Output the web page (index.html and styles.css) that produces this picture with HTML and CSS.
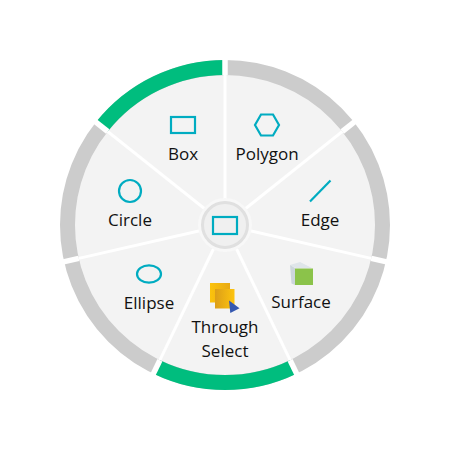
FILE: index.html
```html
<!DOCTYPE html>
<html lang="en">
<head>
<meta charset="utf-8">
<title>Selection wheel</title>
<link rel="stylesheet" href="styles.css">
</head>
<body>
<div class="wheel">
  <svg class="dial" width="450" height="450" viewBox="0 0 450 450">
    <circle class="plate" cx="225" cy="225" r="151"/>
    <circle class="ring" cx="225" cy="225" r="157.500"/>
    <path class="ring-on" d="M225 67.500A157.500 157.500 0 0 0 101.900 126.800"/>
    <path class="ring-on" d="M156.700 366.900A157.500 157.500 0 0 0 293.300 366.900"/>
    <g class="cuts">
      <path d="M225 225V75"/>
      <path d="M225 225L342.300 131.500"/>
      <path d="M225 225L371.200 258.400"/>
      <path d="M225 225L290.100 360.200"/>
      <path d="M225 225L159.900 360.200"/>
      <path d="M225 225L78.800 258.400"/>
      <path d="M225 225L107.700 131.500"/>
    </g>
    <g class="gaps">
      <path d="M225 75V57"/>
      <path d="M342.300 131.500L356.300 120.300"/>
      <path d="M371.200 258.400L388.800 262.400"/>
      <path d="M290.100 360.200L297.900 376.400"/>
      <path d="M159.900 360.200L152.100 376.400"/>
      <path d="M78.800 258.400L61.200 262.400"/>
      <path d="M107.700 131.500L93.700 120.300"/>
    </g>
    <circle class="hub-halo" cx="225" cy="225" r="27"/>
    <circle class="hub" cx="225" cy="225" r="22.500"/>
    <rect class="glyph" x="213" y="217" width="24" height="17"/>
  </svg>

  <div class="item item-box">
    <div class="slot"><svg width="28" height="20" viewBox="0 0 28 20"><rect class="glyph" x="2" y="2" width="24" height="16"/></svg></div>
    <span class="label">Box</span>
  </div>
  <div class="item item-polygon">
    <div class="slot"><svg width="30" height="26" viewBox="0 0 30 26"><path class="glyph" d="M9 2.500H21L27 13L21 23.500H9L3 13Z"/></svg></div>
    <span class="label">Polygon</span>
  </div>
  <div class="item item-edge">
    <div class="slot"><svg width="24" height="24" viewBox="0 0 24 24"><path class="glyph" d="M2 22.500L22.500 1.500"/></svg></div>
    <span class="label">Edge</span>
  </div>
  <div class="item item-surface">
    <div class="slot"><svg width="23" height="23" viewBox="0 0 23 23">
      <path class="cube-top" d="M0 3L10 0L22 6H6Z"/>
      <path class="cube-side" d="M0 3L5 6V23L1.500 21.500Z"/>
      <rect class="cube-face" x="5" y="6.500" width="18" height="16.500"/>
    </svg></div>
    <span class="label">Surface</span>
  </div>
  <div class="item item-through">
    <div class="slot"><svg width="30" height="30" viewBox="0 0 30 30">
      <defs>
        <linearGradient id="amber-back" x1="0" x2="1" y1="0" y2="0">
          <stop offset="0" stop-color="#fcc30c"/><stop offset="1" stop-color="#e8a912"/>
        </linearGradient>
        <linearGradient id="amber-front" x1="0" x2="1" y1="0" y2="0">
          <stop offset="0" stop-color="#dc9e18"/><stop offset="1" stop-color="#fdc40f"/>
        </linearGradient>
      </defs>
      <rect x="0" y="0" width="20" height="19.500" fill="url(#amber-back)"/>
      <rect x="5" y="6" width="19.500" height="19.500" fill="url(#amber-front)"/>
      <path class="cursor" d="M19 17.500L29.500 25.300L20.300 30Z"/>
    </svg></div>
    <span class="label">Through<br>Select</span>
  </div>
  <div class="item item-ellipse">
    <div class="slot"><svg width="28" height="20" viewBox="0 0 28 20"><ellipse class="glyph" cx="14" cy="10" rx="12" ry="8.700"/></svg></div>
    <span class="label">Ellipse</span>
  </div>
  <div class="item item-circle">
    <div class="slot"><svg width="26" height="26" viewBox="0 0 26 26"><circle class="glyph" cx="13" cy="13" r="11"/></svg></div>
    <span class="label">Circle</span>
  </div>
</div>
</body>
</html>
```
FILE: styles.css
```css
html, body {
  margin: 0;
  padding: 0;
  background: #fff;
}
.wheel {
  position: relative;
  width: 450px;
  height: 450px;
  overflow: hidden;
  font-family: "Open Sans", "Noto Sans", sans-serif;
  font-size: 17px;
  line-height: 24px;
  color: #111;
}
.dial {
  position: absolute;
  left: 0;
  top: 0;
}
.plate { fill: #f3f3f3; }
.ring { fill: none; stroke: #cccccc; stroke-width: 15; }
.ring-on { fill: none; stroke: #00bd7e; stroke-width: 15; }
.cuts path { fill: none; stroke: #fff; stroke-width: 3; }
.gaps path { fill: none; stroke: #fff; stroke-width: 5.5; }
.hub-halo { fill: #f8f8f8; }
.hub { fill: #f0f0f0; stroke: #e0e0e0; stroke-width: 3; }
.glyph { fill: none; stroke: #00acc1; stroke-width: 2.2; }
.cube-top { fill: #dfe5e9; }
.cube-side { fill: #cdd6dc; }
.cube-face { fill: #8bc34a; }
.cursor { fill: #3558b0; }
.item {
  position: absolute;
  display: flex;
  flex-direction: column;
  align-items: center;
  gap: 2px;
  width: 100px;
  text-align: center;
}
.slot {
  height: 30px;
  display: flex;
  align-items: center;
  justify-content: center;
}
.slot svg { display: block; }
.label { display: block; }
.item-box { left: 133px; top: 110px; }
.item-polygon { left: 217px; top: 110px; }
.item-edge { left: 270px; top: 176px; }
.item-surface { left: 251px; top: 258px; }
.item-through { left: 175px; top: 283px; }
.item-ellipse { left: 99px; top: 259px; }
.item-circle { left: 80px; top: 176px; }
```
